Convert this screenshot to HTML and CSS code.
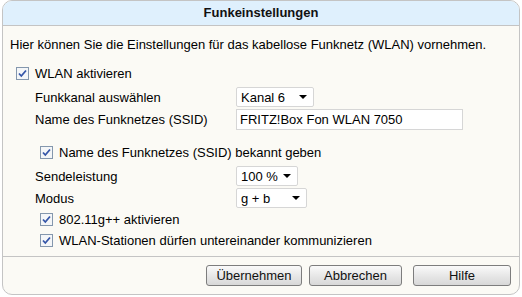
FILE: index.html
```html
<!DOCTYPE html>
<html>
<head lang="de">
    <meta charset="UTF-8">
    <title>Funkeinstellungen</title>
    <link rel="stylesheet" href="styles.css">
</head>
<body>
    <div class="panel">
        <div class="panel-head">Funkeinstellungen</div>
        <div class="panel-body">
            <p class="intro">Hier können Sie die Einstellungen für das kabellose Funknetz (WLAN) vornehmen.</p>

            <div class="check-row top">
                <span class="cb"><svg width="13" height="13" viewBox="0 0 13 13"><rect x="0.5" y="0.5" width="12" height="12" fill="#f4f6f8" stroke="#8497ad"/><path d="M3 6.5 L5.3 9 L10 3.5" fill="none" stroke="#3556a8" stroke-width="1.8"/></svg></span>
                <span>WLAN aktivieren</span>
            </div>

            <div class="field first">
                <label>Funkkanal auswählen</label>
                <div class="select w-kanal"><span>Kanal 6</span><i class="arrow"></i></div>
            </div>
            <div class="field">
                <label>Name des Funknetzes (SSID)</label>
                <div class="text-input">FRITZ!Box Fon WLAN 7050</div>
            </div>

            <div class="check-row sub gap">
                <span class="cb"><svg width="13" height="13" viewBox="0 0 13 13"><rect x="0.5" y="0.5" width="12" height="12" fill="#f4f6f8" stroke="#8497ad"/><path d="M3 6.5 L5.3 9 L10 3.5" fill="none" stroke="#3556a8" stroke-width="1.8"/></svg></span>
                <span>Name des Funknetzes (SSID) bekannt geben</span>
            </div>

            <div class="field first">
                <label>Sendeleistung</label>
                <div class="select w-send"><span>100 %</span><i class="arrow"></i></div>
            </div>
            <div class="field">
                <label>Modus</label>
                <div class="select w-modus"><span>g + b</span><i class="arrow"></i></div>
            </div>

            <div class="check-row sub">
                <span class="cb"><svg width="13" height="13" viewBox="0 0 13 13"><rect x="0.5" y="0.5" width="12" height="12" fill="#f4f6f8" stroke="#8497ad"/><path d="M3 6.5 L5.3 9 L10 3.5" fill="none" stroke="#3556a8" stroke-width="1.8"/></svg></span>
                <span>802.11g++ aktivieren</span>
            </div>
            <div class="check-row sub">
                <span class="cb"><svg width="13" height="13" viewBox="0 0 13 13"><rect x="0.5" y="0.5" width="12" height="12" fill="#f4f6f8" stroke="#8497ad"/><path d="M3 6.5 L5.3 9 L10 3.5" fill="none" stroke="#3556a8" stroke-width="1.8"/></svg></span>
                <span>WLAN-Stationen dürfen untereinander kommunizieren</span>
            </div>
        </div>
        <div class="panel-foot">
            <button class="btn b-ok">Übernehmen</button>
            <button class="btn b-cancel">Abbrechen</button>
            <button class="btn b-help">Hilfe</button>
        </div>
    </div>
</body>
</html>
```

FILE: styles.css
```css
* {
    margin: 0;
    padding: 0;
    box-sizing: border-box;
}
body {
    background: #fff;
    font-family: "Liberation Sans", Arial, sans-serif;
    font-size: 13px;
    color: #000;
}
.panel {
    margin: 0 2px 0 2px;
    height: 295px;
    border: 1px solid #c4c4c4;
    border-radius: 10px 10px 10px 10px;
    background: #fbfaf5;
    display: flex;
    flex-direction: column;
    overflow: hidden;
}
.panel-head {
    height: 25px;
    line-height: 24px;
    background: #dff0fd;
    border-bottom: 1px solid #c4c4c4;
    text-align: center;
    font-weight: bold;
    color: #111;
}
.panel-body {
    flex: 1;
    padding: 0 0 0 7px;
}
.intro {
    margin-top: 11px;
    line-height: 16px;
}
.check-row {
    display: flex;
    align-items: center;
    height: 21px;
    gap: 6px;
}
.check-row.top {
    margin-top: 10px;
    padding-left: 6px;
}
.check-row.sub {
    padding-left: 30px;
}
.check-row.gap {
    margin-top: 12px;
}
.cb {
    width: 13px;
    height: 13px;
    display: block;
}
.cb svg {
    display: block;
}
.field {
    display: grid;
    grid-template-columns: 201px auto;
    align-items: center;
    height: 22px;
    padding-left: 25px;
}
.field.first {
    margin-top: 2px;
}
.select {
    height: 20px;
    background: #fff;
    border: 1px solid #d6d6d6;
    border-radius: 2px;
    display: flex;
    align-items: center;
    justify-content: space-between;
    padding: 0 6px 0 4px;
}
.w-kanal { width: 78px; }
.w-send { width: 62px; }
.w-modus { width: 71px; }
.arrow {
    width: 0;
    height: 0;
    border-left: 4px solid transparent;
    border-right: 4px solid transparent;
    border-top: 4px solid #000;
}
.text-input {
    width: 227px;
    height: 21px;
    background: #fff;
    border: 1px solid #d6d6d6;
    padding-left: 3px;
    line-height: 19px;
}
.panel-foot {
    height: 38px;
    border-top: 1px solid #c4c4c4;
    display: flex;
    justify-content: flex-end;
    align-items: flex-start;
    padding: 8px 8px 0 0;
    gap: 7px;
}
.btn {
    height: 21px;
    font-family: "Liberation Sans", Arial, sans-serif;
    font-size: 13px;
    border: 1px solid #7d7d7d;
    border-radius: 3px;
    background: linear-gradient(#fafafa, #e6e6e6 55%, #d8d8d8);
    color: #111;
}
.b-ok { width: 96px; }
.b-cancel { width: 93px; }
.b-help { width: 98px; margin-left: 4px; }
```
